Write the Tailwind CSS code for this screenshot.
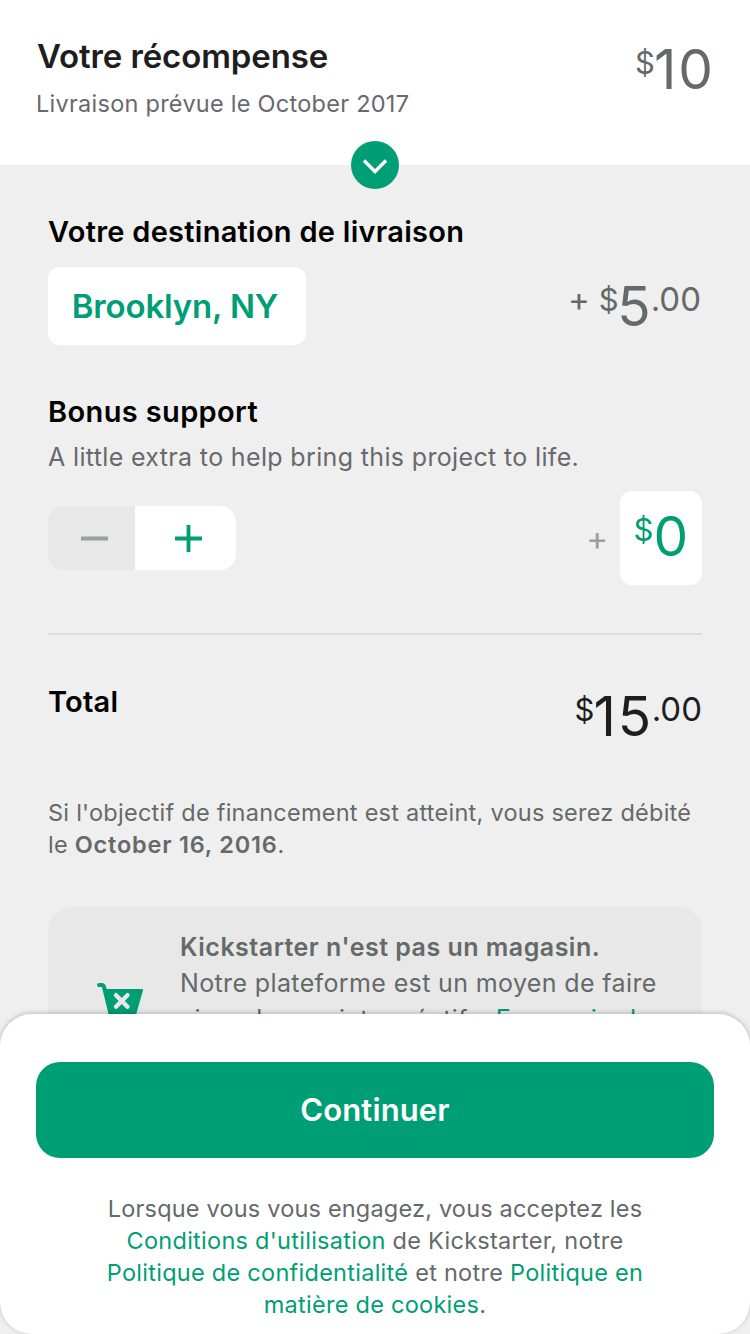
<!DOCTYPE html>
<html lang="fr">
<head>
<meta charset="utf-8">
<title>Votre récompense</title>
<script src="https://cdn.jsdelivr.net/npm/@tailwindcss/browser@4"></script>
</head>
<body class="relative h-[1334px] w-[750px] overflow-hidden bg-[#efefef] font-['Inter','Liberation_Sans',sans-serif] text-[#656969] whitespace-nowrap">

<header class="relative flex h-[165px] justify-between bg-white pt-9 pr-[35px] pl-[37px]">
  <div>
    <h1 class="text-[33px]/[40px] font-semibold tracking-[-0.11px] text-[#1e1e1e]">Votre récompense</h1>
    <p class="-ml-px pt-[11.5px] text-[23.5px]/[32px] tracking-[0.26px] text-[#68686e]">Livraison prévue le October 2017</p>
  </div>
  <div class="flex items-start pt-[5px]">
    <span class="mt-0.5 -mr-px text-[31px]/[40px]">$</span>
    <span class="text-[55px]/[56px] tracking-[2px]">10</span>
  </div>
  <button class="absolute top-[141px] left-[351px] flex size-12 items-center justify-center rounded-full bg-[#009e74]" aria-label="Afficher">
    <svg class="size-12" viewBox="0 0 48 48" fill="none" stroke="#fff" stroke-width="3.4"><path d="M13 19.500l11 11 11-11"/></svg>
  </button>
</header>

<main class="px-12">
  <h2 class="mt-[46.5px] text-[29px]/[40px] font-semibold tracking-[0.27px] text-black">Votre destination de livraison</h2>
  <section class="mt-[15.5px] flex items-start justify-between">
    <button class="h-[78px] w-[258px] rounded-xl bg-white pr-1 text-[33px]/[78px] font-semibold tracking-[-0.16px] text-[#009e74]">Brooklyn, NY</button>
    <div class="flex items-start pt-[11px] pr-px">
      <span class="mt-px mr-[9px] text-[33px]/[40px]">+</span>
      <span class="mt-0.5 -mr-[1.5px] text-[31px]/[40px]">$</span>
      <span class="text-[55px]/[56px]">5</span>
      <span class="mt-px text-[33px]/[40px]">.00</span>
    </div>
  </section>

  <h2 class="mt-[46.5px] text-[29px]/[40px] font-semibold tracking-[0.37px] text-black">Bonus support</h2>
  <p class="mt-[9.5px] text-[25px]/[32px] tracking-[0.35px] text-[#68686e]">A little extra to help bring this project to life.</p>
  <section class="mt-[18px] flex h-[94px] items-center justify-between">
    <div class="flex h-16 overflow-hidden rounded-2xl">
      <button class="flex w-[87px] items-center justify-center bg-[#e8e8e8] pl-[6px]" aria-label="Moins">
        <svg class="h-[27px] w-[27px]" viewBox="0 0 27 27" stroke="#9b9f9e" stroke-width="3.8"><path d="M0 13.500h27"/></svg>
      </button>
      <button class="flex w-[101px] items-center justify-center bg-white pl-[6px]" aria-label="Plus">
        <svg class="h-[27px] w-[27px]" viewBox="0 0 27 27" stroke="#009e74" stroke-width="3.8"><path d="M0 13.500h27M13.500 0v27"/></svg>
      </button>
    </div>
    <div class="flex items-center">
      <span class="mr-3 text-[33px]/[40px] text-[#9b9f9e]">+</span>
      <div class="flex h-[94px] w-[82px] items-start rounded-xl bg-white pt-[17px] pl-[13.5px] text-[#009e74]">
        <span class="mt-0.5 text-[31px]/[40px]">$</span>
        <span class="text-[55px]/[56px]">0</span>
      </div>
    </div>
  </section>
  <hr class="mt-12 border-t-2 border-[#dcdcdc]">

  <section class="flex items-start justify-between pt-[46.5px]">
    <h2 class="text-[29px]/[40px] font-semibold tracking-[0.23px] text-black">Total</h2>
    <div class="flex items-start pt-[6.5px] text-[#1e1e1e]">
      <span class="mt-0.5 -mr-[1px] text-[31px]/[40px]">$</span>
      <span class="-mr-[1.5px] text-[55px]/[56px] tracking-[2px]">15</span>
      <span class="mt-px text-[33px]/[40px]">.00</span>
    </div>
  </section>

  <p class="mt-[52.5px] text-[23.5px]/[32px] tracking-[0.25px]">Si l'objectif de financement est atteint, vous serez débité<br>le <b class="font-semibold tracking-[0.78px]">October 16, 2016</b>.</p>

  <section class="mt-[46.5px] flex h-[180px] rounded-3xl bg-[#e8e8e8] pl-12">
    <svg class="mt-[73px] h-16 w-[50px]" viewBox="0 0 50 64"><path d="M3 5H6Q7.500 5 8 7L17 44H40" fill="none" stroke="#009e74" stroke-width="4" stroke-linecap="round"/><path d="M8 9H46.200Q47.300 9 47 10.200L38 42H16z" fill="#009e74"/><path d="M20 15.200l11.500 11.500M31.500 15.200L20 26.700" stroke="#e8e8e8" stroke-width="4.400" stroke-linecap="round"/></svg>
    <p class="mt-[22px] ml-[34px] text-[25px]/[36px] tracking-[0.37px]"><b class="font-semibold tracking-[0.49px]">Kickstarter n'est pas un magasin.</b><br>Notre plateforme est un moyen de faire<br>vivre des projets créatifs. <a class="text-[#009e74]">En savoir plus</a></p>
  </section>
</main>

<footer class="absolute inset-x-0 top-[1014px] h-80 rounded-[32px] bg-white px-9 pt-12 shadow-[0_-1px_5px_rgba(0,0,0,0.22)]">
  <button class="h-24 w-full rounded-3xl bg-[#009e74] text-[31px]/[96px] font-semibold tracking-[0.12px] text-white">Continuer</button>
  <p class="mt-[34.5px] text-center text-[23.5px]/[32px] tracking-[0.27px]"><span class="tracking-[0.19px]">Lorsque vous vous engagez, vous acceptez les</span><br><a class="text-[#009e74]">Conditions d'utilisation</a> de Kickstarter, notre<br><a class="text-[#009e74]">Politique de confidentialité</a> et notre <a class="text-[#009e74]">Politique en<br>matière de cookies</a>.</p>
</footer>
</body>
</html>
